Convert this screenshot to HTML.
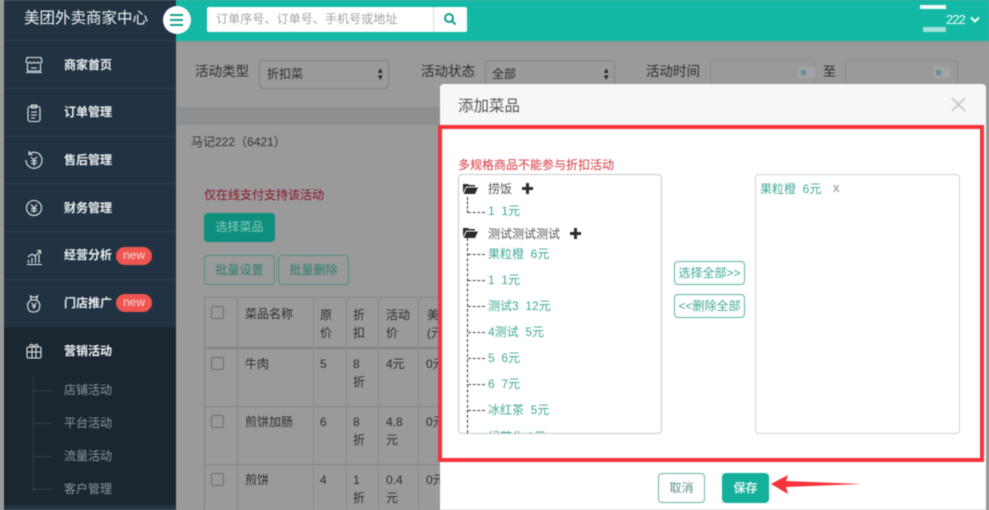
<!DOCTYPE html>
<html lang="zh"><head><meta charset="utf-8"><title>添加菜品</title>
<style>
html,body{margin:0;padding:0}
body{width:989px;height:510px;overflow:hidden;position:relative;background:#9a9a9a;font-family:"Liberation Sans","Noto Sans CJK SC",sans-serif;font-size:12px;color:#3a3a3a}
#w{position:absolute;left:0;top:0;width:989px;height:510px;overflow:hidden;filter:blur(.5px)}
.a{position:absolute;white-space:nowrap;line-height:16px}
.b{position:absolute;box-sizing:border-box}
.m{left:64px;color:#eef1f3;font-weight:700;font-size:12px}
.s{left:64px;color:#8d969d;font-size:12px}
.sep{position:absolute;left:4px;width:172px;height:1px;background:#2d4050}
.new{position:absolute;left:116px;width:36px;height:18px;border-radius:9px;background:#f0544f;color:#f6dcd9;font-size:12px;line-height:17px;text-align:center}
.ic{position:absolute;left:24px;width:20px;height:20px;fill:none;stroke:#e6eaec;stroke-width:1.1}
.t{color:#2e2e2e;font-size:12px}
.l{color:#2e2e2e;font-size:13.500px}
.g{color:#1f6d62}
.leaf{color:#3fa897;font-size:12px;left:488px}
.gb{position:absolute;border:1px solid #4f8f86;border-radius:4px;box-sizing:border-box;color:#2f7d70;text-align:center;font-size:12px}
.cb{position:absolute;left:211px;width:13px;height:13px;border:1px solid #6e6e6e;border-radius:2px;box-sizing:border-box}
.v{position:absolute;width:1px;background:#858585;top:297px;height:213px}
.h{position:absolute;left:204px;width:236px;height:1px;background:#848484}
.cal{position:absolute;top:67px;width:17px;height:11px;background:#a3a3a3}
.cal i{position:absolute;left:3px;top:3px;width:5px;height:5px;background:#5f8f9c}
</style></head><body><div id="w">

<div class="b" style="left:176px;top:0;width:813px;height:41px;background:#13b9a4"></div>
<div class="b" style="left:176px;top:41px;width:813px;height:2px;background:#8f9a98"></div>

<!-- sidebar -->
<div class="b" style="left:4px;top:0;width:172px;height:510px;background:#213342"></div>
<div class="b" style="left:4px;top:327px;width:172px;height:178px;background:#1a2731"></div>
<div class="sep" style="top:40px"></div><div class="sep" style="top:88px"></div><div class="sep" style="top:136px"></div><div class="sep" style="top:183px"></div><div class="sep" style="top:231px"></div><div class="sep" style="top:279px"></div>
<div class="a" style="left:24px;top:9px;color:#f2f4f5;font-size:15.500px;line-height:20px">美团外卖商家中心</div>
<div class="b" style="left:163px;top:6px;width:28px;height:28px;border-radius:50%;background:#fff"></div>
<div class="b" style="left:170px;top:14px;width:13px;height:2px;background:#13a392"></div>
<div class="b" style="left:170px;top:19px;width:13px;height:2px;background:#13a392"></div>
<div class="b" style="left:170px;top:24px;width:13px;height:2px;background:#13a392"></div>

<svg class="ic" style="top:55px" viewBox="0 0 20 20"><path d="M3 2.500h14l1 4.500c-1.500 1.500-3 1.500-4 0-1 1.500-3 1.500-4 0-1 1.500-3 1.500-4 0-1 1.500-3 1.500-4 0zM3.500 9v7h13V9M7 13h6M2 17.500h16"/></svg>
<div class="a m" style="top:57px">商家首页</div>
<svg class="ic" style="top:103px" viewBox="0 0 20 20"><rect x="4" y="3.500" width="12" height="15" rx="2"/><path d="M7.500 2h5v3h-5zM7 9h6M7 12h6M7 15h4"/></svg>
<div class="a m" style="top:104px">订单管理</div>
<svg class="ic" style="top:150px" viewBox="0 0 20 20"><path d="M5 4a8 8 0 1 1-3 6M5 1v3.500h3.500M7 7l3 3 3-3M10 10v6M7 11h6M7 13.500h6"/></svg>
<div class="a m" style="top:152px">售后管理</div>
<svg class="ic" style="top:198px" viewBox="0 0 20 20"><circle cx="10" cy="10" r="7.500"/><path d="M7 6.500l3 3.500 3-3.500M10 10v5M7 10.500h6M7 12.800h6"/></svg>
<div class="a m" style="top:200px">财务管理</div>
<svg class="ic" style="top:247px" viewBox="0 0 20 20"><path d="M3 17.500h15M4.500 16v-3M8 16v-5M11.500 16V9M15 16V7M4 10l4-3 3 2 5-5M13 3.500h3.500V7"/></svg>
<div class="a m" style="top:247px">经营分析</div><div class="new" style="top:247px">new</div>
<svg class="ic" style="top:294px" viewBox="0 0 20 20"><path d="M6.500 2c1 1 2 1.500 3.500 1 1.500.5 2.500 0 3.500-1l-1 4c3 2 4 5 3 8-.5 3-3 4-6 4s-5-1-5.500-4c-1-3 0-6 3-8zM7 6h6M7.500 9l2.500 2.500L12.500 9M10 11.500V15M8 12.500h4"/></svg>
<div class="a m" style="top:295px">门店推广</div><div class="new" style="top:294px">new</div>
<svg class="ic" style="top:341px" viewBox="0 0 20 20"><rect x="3" y="6" width="14" height="11" rx="1.500"/><path d="M3 11h14M8 6v11M12 6v11M10 6C8 2 5 3 6.500 6M10 6c2-4 5-3 3.500 0"/></svg>
<div class="a m" style="top:343px;color:#f6f7f8">营销活动</div>
<div class="b" style="left:33px;top:376px;width:1px;height:115px;border-left:1px dotted #46525b"></div>
<div class="b" style="left:34px;top:390px;width:18px;border-top:1px dotted #46525b"></div>
<div class="b" style="left:34px;top:423px;width:18px;border-top:1px dotted #46525b"></div>
<div class="b" style="left:34px;top:456px;width:18px;border-top:1px dotted #46525b"></div>
<div class="b" style="left:34px;top:489px;width:18px;border-top:1px dotted #46525b"></div>
<div class="a s" style="top:382px">店铺活动</div>
<div class="a s" style="top:415px">平台活动</div>
<div class="a s" style="top:448px">流量活动</div>
<div class="a s" style="top:481px">客户管理</div>

<!-- search -->
<div class="b" style="left:207px;top:7px;width:260px;height:25px;background:#fff;border-radius:2px"></div>
<div class="b" style="left:433px;top:7px;width:1px;height:25px;background:#d5dedc"></div>
<div class="a" style="left:216px;top:11px;color:#a3a3a3;font-size:12.100px">订单序号、订单号、手机号或地址</div>
<svg class="b" style="left:443px;top:12px" width="14" height="14" viewBox="0 0 14 14" fill="none" stroke="#169b8b" stroke-width="2"><circle cx="6" cy="6" r="4"/><path d="M9 9l3.500 3.500"/></svg>

<div class="b" style="left:920px;top:5px;width:26px;height:4px;background:#f4fbfa"></div>
<div class="b" style="left:923px;top:27px;width:23px;height:5px;background:#9fe3da"></div>
<div class="a" style="left:946px;top:12px;color:#f2fbfa;font-size:13px;letter-spacing:-1px">222</div>
<svg class="b" style="left:970px;top:16px" width="10" height="8" viewBox="0 0 10 8" fill="none" stroke="#f2fbfa" stroke-width="2"><path d="M1 1.500l4 4 4-4"/></svg>

<!-- filter row -->
<div class="a l" style="left:195px;top:64px">活动类型</div>
<div class="b" style="left:259px;top:60px;width:130px;height:29px;border:1px solid #858585;border-radius:4px"></div>
<div class="a t" style="left:267px;top:66px">折扣菜</div>
<div class="a" style="left:378px;top:67px;font-size:9px;line-height:7px;color:#222">▴<br>▾</div>
<div class="a l" style="left:421px;top:64px">活动状态</div>
<div class="b" style="left:485px;top:60px;width:130px;height:29px;border:1px solid #858585;border-radius:4px"></div>
<div class="a t" style="left:492px;top:66px">全部</div>
<div class="a" style="left:604px;top:67px;font-size:9px;line-height:7px;color:#222">▴<br>▾</div>
<div class="a l" style="left:646px;top:64px">活动时间</div>
<div class="b" style="left:710px;top:60px;width:105px;height:25px;border:1px solid #8e8e8e;border-radius:3px"></div>
<div class="cal" style="left:798px"><i></i></div>
<div class="a" style="left:823px;top:64px;font-size:13px;color:#2a2a2a">至</div>
<div class="b" style="left:845px;top:60px;width:113px;height:25px;border:1px solid #8e8e8e;border-radius:3px"></div>
<div class="cal" style="left:933px"><i></i></div>

<div class="b" style="left:177px;top:107px;width:264px;height:18px;background:#8d8f91"></div>
<div class="a" style="left:191px;top:134px;color:#353535;font-size:12px">马记222（6421）</div>
<div class="a" style="left:204px;top:187px;color:#8d1428;font-size:12px">仅在线支付支持该活动</div>
<div class="b" style="left:204px;top:213px;width:71px;height:29px;border-radius:4px;background:#0e8f7e;color:#8ccabf;text-align:center;line-height:28px">选择菜品</div>
<div class="gb" style="left:204px;top:255px;width:71px;height:30px;line-height:28px">批量设置</div>
<div class="gb" style="left:278px;top:255px;width:71px;height:30px;line-height:28px">批量删除</div>

<!-- table -->
<div class="h" style="top:297px"></div><div class="h" style="top:347px;height:2px"></div><div class="h" style="top:406px"></div><div class="h" style="top:464px"></div>
<div class="v" style="left:204px"></div><div class="v" style="left:237px"></div><div class="v" style="left:313px;background:#8e8e8e"></div><div class="v" style="left:346px;background:#8e8e8e"></div><div class="v" style="left:378px;background:#8e8e8e"></div><div class="v" style="left:418px;background:#8e8e8e"></div>
<div class="cb" style="top:306px"></div><div class="cb" style="top:357px"></div><div class="cb" style="top:415px"></div><div class="cb" style="top:473px"></div>
<div class="a t" style="left:245px;top:306px">菜品名称</div>
<div class="a t" style="left:320px;top:306px;line-height:18px">原<br>价</div>
<div class="a t" style="left:353px;top:306px;line-height:18px">折<br>扣</div>
<div class="a t" style="left:386px;top:306px;line-height:18px">活动<br>价</div>
<div class="a t" style="left:427px;top:306px;line-height:18px">美<br>(元</div>
<div class="a t" style="left:245px;top:356px">牛肉</div><div class="a t" style="left:320px;top:356px">5</div>
<div class="a t" style="left:353px;top:355px;line-height:18px">8<br>折</div><div class="a t" style="left:386px;top:356px">4元</div><div class="a t" style="left:426px;top:356px">0元</div>
<div class="a t" style="left:245px;top:414px">煎饼加肠</div><div class="a t" style="left:320px;top:414px">6</div>
<div class="a t" style="left:353px;top:413px;line-height:18px">8<br>折</div><div class="a t" style="left:386px;top:413px;line-height:18px">4.8<br>元</div><div class="a t" style="left:426px;top:414px">0元</div>
<div class="a t" style="left:245px;top:472px">煎饼</div><div class="a t" style="left:320px;top:472px">4</div>
<div class="a t" style="left:353px;top:471px;line-height:18px">1<br>折</div><div class="a t" style="left:386px;top:471px;line-height:18px">0.4<br>元</div><div class="a t" style="left:426px;top:472px">0元</div>

<!-- modal -->
<div class="b" style="left:440px;top:84px;width:546px;height:426px;background:#fff;border-radius:4px 4px 0 0"></div>
<div class="b" style="left:440px;top:84px;width:546px;height:42px;background:#f7f7f7;border-radius:4px 4px 0 0"></div>
<div class="a" style="left:458px;top:97px;font-size:15.500px;line-height:20px;color:#555">添加菜品</div>
<svg class="b" style="left:950px;top:96px" width="17" height="17" viewBox="0 0 17 17" fill="none" stroke="#c8c8c8" stroke-width="1.800"><path d="M2 2l13 13M15 2L2 15"/></svg>
<div class="b" style="left:438px;top:125px;width:546px;height:337px;border:4px solid #f6323a"></div>

<div class="a" style="left:458px;top:157px;color:#d8363f;font-size:12px">多规格商品不能参与折扣活动</div>
<div class="b" style="left:458px;top:174px;width:204px;height:260px;border:1px solid #c9c9c9;border-radius:4px;overflow:hidden">
  <div class="b" style="left:8px;top:22px;width:1px;height:16px;border-left:1px dashed #333"></div>
  <div class="b" style="left:8px;top:63px;height:200px;width:1px;border-left:1px dashed #333"></div>
  <div class="b" style="left:9px;top:37px;width:17px;border-top:1px dashed #444"></div>
  <div class="b" style="left:9px;top:79px;width:17px;border-top:1px dashed #444"></div>
  <div class="b" style="left:9px;top:105px;width:17px;border-top:1px dashed #444"></div>
  <div class="b" style="left:9px;top:131px;width:17px;border-top:1px dashed #444"></div>
  <div class="b" style="left:9px;top:157px;width:17px;border-top:1px dashed #444"></div>
  <div class="b" style="left:9px;top:183px;width:17px;border-top:1px dashed #444"></div>
  <div class="b" style="left:9px;top:209px;width:17px;border-top:1px dashed #444"></div>
  <div class="b" style="left:9px;top:235px;width:17px;border-top:1px dashed #444"></div>
  <div class="a leaf" style="left:29px;top:254px">绿茶化 3元</div>
</div>
<svg class="b" style="left:463px;top:183px" width="15" height="11" viewBox="0 0 15 11"><path fill="#2b2b2b" d="M0 1h5l1 1h6v1.500H3L0 10zM3.500 4.500H15L12 11H.8z"/></svg>
<div class="a" style="left:488px;top:181px;color:#555">捞饭</div>
<div class="b" style="left:522px;top:187px;width:11px;height:3px;background:#2b2b2b"></div><div class="b" style="left:526px;top:183px;width:3px;height:11px;background:#2b2b2b"></div>
<div class="a leaf" style="top:203px">1&nbsp; 1元</div>
<svg class="b" style="left:463px;top:227px" width="15" height="11" viewBox="0 0 15 11"><path fill="#2b2b2b" d="M0 1h5l1 1h6v1.500H3L0 10zM3.500 4.500H15L12 11H.8z"/></svg>
<div class="a" style="left:488px;top:226px;color:#555">测试测试测试</div>
<div class="b" style="left:570px;top:232px;width:11px;height:3px;background:#2b2b2b"></div><div class="b" style="left:574px;top:228px;width:3px;height:11px;background:#2b2b2b"></div>
<div class="a leaf" style="top:246px">果粒橙&nbsp; 6元</div>
<div class="a leaf" style="top:272px">1&nbsp; 1元</div>
<div class="a leaf" style="top:298px">测试3&nbsp; 12元</div>
<div class="a leaf" style="top:324px">4测试&nbsp; 5元</div>
<div class="a leaf" style="top:350px">5&nbsp; 6元</div>
<div class="a leaf" style="top:376px">6&nbsp; 7元</div>
<div class="a leaf" style="top:402px">冰红茶&nbsp; 5元</div>

<div class="gb" style="left:674px;top:261px;width:71px;height:24px;line-height:22px;border-color:#5fb5a8;color:#3fa897">选择全部&gt;&gt;</div>
<div class="gb" style="left:674px;top:294px;width:71px;height:24px;line-height:22px;border-color:#5fb5a8;color:#3fa897">&lt;&lt;删除全部</div>

<div class="b" style="left:755px;top:174px;width:205px;height:260px;border:1px solid #d2d2d2;border-radius:4px"></div>
<div class="a" style="left:760px;top:181px;color:#3fa897">果粒橙&nbsp; 6元</div>
<div class="a" style="left:833px;top:180px;color:#888;font-size:13px">x</div>

<div class="b" style="left:658px;top:473px;width:47px;height:30px;border:1px solid #6cb3a9;border-radius:4px;color:#5b8f88;text-align:center;line-height:28px">取消</div>
<div class="b" style="left:722px;top:473px;width:47px;height:30px;border-radius:4px;background:#15b09b;color:#e6f6f3;text-align:center;line-height:30px;font-weight:700">保存</div>
<svg class="b" style="left:770px;top:473px" width="95" height="24" viewBox="0 0 95 24"><path fill="#f6323a" d="M1 11L18 2l-2 6 76 3-76 3 2 7z"/></svg>

</div></body></html>
